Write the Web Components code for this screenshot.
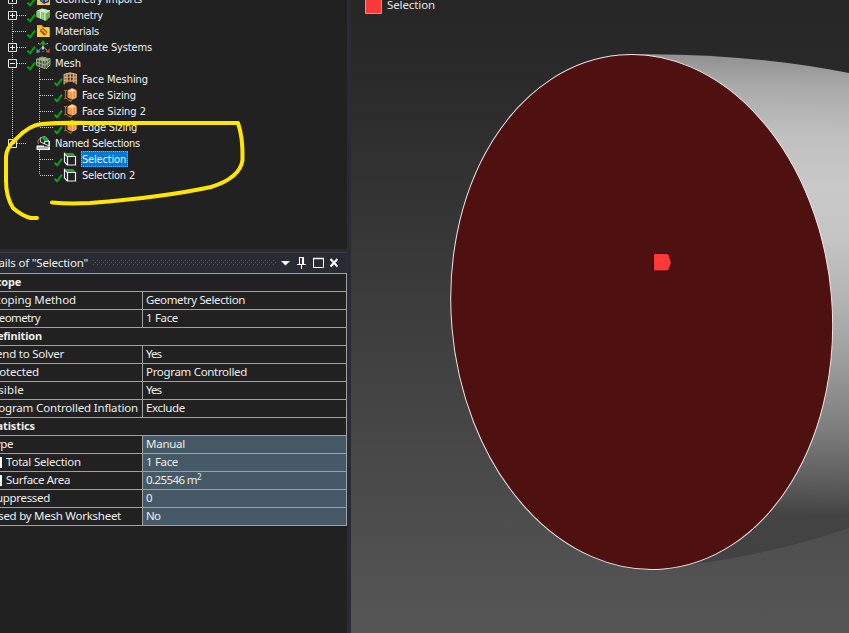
<!DOCTYPE html>
<html lang="en"><head><meta charset="utf-8"><title>Mechanical – Named Selections</title>
<style>body{margin:0;background:#212121;overflow:hidden}</style></head><body>
<mech-app></mech-app>
<script>
const define=(n,c)=>customElements.define(n,c);
class Base extends HTMLElement{
  connectedCallback(){ if(!this.shadowRoot){this.attachShadow({mode:'open'}).innerHTML=this.render();} }
}
/* Text run set to a given width through letter spacing. */
define('fit-text',class extends Base{
  render(){return `<style>:host{display:inline-block;white-space:pre;width:max-content;line-height:inherit}span{display:inline-block}</style><span>${this.getAttribute('text').replace('^2','<sup style="font-size:8px;line-height:0;vertical-align:4px">2</sup>')}</span>`}
  connectedCallback(){super.connectedCallback();const s=this.shadowRoot.querySelector('span'),w=+this.getAttribute('w');
    if(w){const n=s.textContent.length;s.style.letterSpacing=((w-s.getBoundingClientRect().width)/n)+'px'}}
});
const sizing=`<path d="M4.500 3.500L9 1l4.500 2v7.500L9 12.500 4.500 10.500z" fill="#f19a4b"/><path d="M5 4l4-2.300L13 3.300 9.500 5z" fill="#ffd6ad"/><path d="M5 4l4.500 1v7M13 4v6.500L9.500 12" stroke="#ffc38c" stroke-width=".8" fill="none"/><path d="M2.500 3.500v8M1 3.500h3M1 11.500h3M4 12.500l4 1.800M8 12.300v2.700" stroke="#a5642c" stroke-width="1.200" fill="none"/>`;
const select=`<path d="M4.500 5.500h8v8.500h-8z" fill="none" stroke="#eee" stroke-width="1.200"/><path d="M4.500 5.500l-3-3v8.500l3 3" fill="none" stroke="#eee" stroke-width="1.200"/><path d="M2 2h8l3 3.200H5z" fill="#18aa20"/><path d="M4.500 5.500H13" stroke="#eee"/>`;
const icons={
 imports:`<path d="M1 2h5l1 2h7v10H1z" fill="#ffc93c"/><path d="M4 5l5-2 4 3v5l-5 2-4-3z" fill="#183f7d"/><path d="M4 6l3 2v3l-3-2z" fill="#2e80d7"/><path d="M9 8l3-1v3l-3 1z" fill="#e88a2f"/>`,
 geometry:`<path d="M.5 4L6 1.500 14 3.500V10l-4 4L.5 10z" fill="#72a955"/><path d="M.5 4L6 1.500 14 3.500 9 6z" fill="#cfe8ba"/><path d="M.5 4L9 6v7.500L.5 10z" fill="#91c577"/><path d="M4.500 5v6.500M9 6v7.500M9 6L14 3.500M4.500 5l5-2.500" stroke="#e3f2d6" stroke-width="1" fill="none"/>`,
 materials:`<path d="M1 2h5l1 2h6.500v10H1z" fill="#f7b718"/><path d="M1 5h12.500v9H1z" fill="#ffcf3d"/><path d="M4.500 6l3-1 4 4-1.500 3-2 .5-4-4z" fill="#9b571a"/><path d="M5 7l2-1 4 4-1 1.500z" fill="#ee9a45"/>`,
 coords:`<path d="M7 8V3M7 8l5 4M7 8l-5 4M2 4l3 2M12 4l-3 2M7 9v4" stroke="#bbb" stroke-width="1" stroke-dasharray="2 1"/><path d="M7 1l3 4H4z" fill="#16a422"/><path d="M.5 14V9.500l4 3.500z" fill="#5897d5"/><path d="M13.500 14V9.500l-4 3.500z" fill="#e0452d"/><path d="M6 4h2v4H6z" fill="#16a422"/><circle cx="7" cy="8.700" r="1.300" fill="#ddd"/>`,
 mesh:`<path d="M.5 4L6 1.500 14 3.500V10l-4 4L.5 10.500z" fill="#47593e"/><path d="M.5 4L6 1.500 14 3.500 9 6z" fill="#7f956f"/><path d="M.5 4L9 6v7.500L.5 10.500zM3.300 5v6.500M6.300 5.500v7M.5 7.300L9 10l5-3.500M3.300 2.800l8.200 2.400M11.700 5v6.500M9 6l5-2.500V10l-4 4M5 5l5-2.500" stroke="#b3c3a5" stroke-width=".8" fill="none"/>`,
 facemesh:`<path d="M1 3q6-3 12.500 0v10.500l-3-2q-3.500-1.500-6.500 0l-3 2z" fill="#9d683b"/><path d="M1 3.500q6-3 12.500 0M1 6.500q6-2 12.500 0M1 9.500q6-2 12.500 0M1 3v10.500M4 2v9.500M7.200 1.500v9.500M10.400 2v9.500M13.400 3v10.500" stroke="#e3c39c" stroke-width=".8" fill="none"/><path d="M5 4h1.500v1.500H5zM8 4h1.500v1.500H8zM5 7h1.500v2H5zM8 7h1.500v2H8z" fill="#3a271a"/>`,
 sizing,select,
 named:`<path d="M4 3l5-1.500 4.500 5V11L9 9 4.500 7z" fill="#272727" stroke="#ddd"/><path d="M5 2.500l4-1 3.500 4-4 .5z" fill="#19aa29"/><path d="M8.500 6.500l4.500-.5v5M8.500 6.500V9" stroke="#fff" fill="none"/><path d="M3.500 4Q1 6 2.500 9" stroke="#a9642f" stroke-width="1.200" fill="none"/><path d="M.5 10.500h7l1 1h5.500v3.500H.5z" fill="#eee"/><path d="M2 13h10" stroke="#777"/>`
};
define('tree-row',class extends Base{
 render(){const a=k=>this.getAttribute(k),l=+a('level'),x=l?63:36,ex=a('expand');let g='';
  const line=(p)=>`<path d="${p}" stroke="#c9c9c9" stroke-width="1" stroke-dasharray="1 1" fill="none"/>`;
  if(a('trunk')!=='none')g+=line('M12.5 0V'+(a('trunk')==='end'?8:16));
  if(l){g+=line('M39.5 0V'+(a('last')!==null?8:16))+line('M40 8.500H54')}
  else g+=line('M13 8.500H27');
  if(a('open')!==null)g+=line('M39.500 13V16');
  if(ex)g+=`<path d="M8.500 4.500h8v8h-8z" fill="#212121" stroke="#e4e4e4"/><path d="M10 8.500h5${ex==='+'?'M12.500 6v5':''}" stroke="#eee"/>`;
  if(a('nocheck')===null)g+=`<path d="M${x-8.500} 11.600l2.500 2.700 5-6.600" stroke="#05a510" stroke-width="2" fill="none"/>`;
  return `<style>:host{display:flex;height:16px;font:11px/16px "DejaVu Sans Condensed","DejaVu Sans",sans-serif;font-stretch:condensed;color:#f1f1f1}svg{flex:none;overflow:visible}.l{padding:1px 2px 0 1px;height:16px;line-height:16px;box-sizing:border-box}.s{background:#0078d7;outline:1px dotted #f39a4d;outline-offset:-1px}</style>
  <svg width="${l?81:54}" height="16">${g}<g transform="translate(${x},0)">${icons[a('icon')]}</g></svg><div class="l ${a('selected')!==null?'s':''}"><fit-text text="${a('label')}" w="${a('w')}"></fit-text></div>`}
});
define('outline-tree',class extends Base{render(){
 const r=[['Geometry Imports','imports',87,'expand="+"'],['Geometry','geometry',48,'expand="+"'],['Materials','materials',44,''],['Coordinate Systems','coords',97,'expand="+"'],['Mesh','mesh',26,'expand="-" open'],['Face Meshing','facemesh',66,'level="1"'],['Face Sizing','sizing',54,'level="1"'],['Face Sizing 2','sizing',64,'level="1"'],['Edge Sizing','sizing',55,'level="1" last'],['Named Selections','named',85,'expand="-" open nocheck trunk="end"'],['Selection','select',44,'level="1" trunk="none" selected'],['Selection 2','select',53,'level="1" last trunk="none"']];
 return `<style>:host{display:block;height:249px;overflow:hidden;background:#212121}div{margin-top:-9px}</style><div>${r.map(i=>`<tree-row label="${i[0]}" icon="${i[1]}" w="${i[2]}" ${i[3]}></tree-row>`).join('')}</div>`}
});
define('detail-row',class extends Base{render(){const a=k=>this.getAttribute(k),h=a('head')!==null;
 return `<style>:host{display:grid;grid-template-columns:${h?'1fr':'142px 1fr'};height:18px;box-sizing:border-box;border-bottom:1px solid #a0a0a0;font:${h?'bold 11px':'11.5px'}/17px "Noto Sans",sans-serif;color:#ededed}.k{display:flex;justify-content:flex-start;overflow:hidden;position:relative}fit-text{margin-top:-1px}.k fit-text{margin-left:${a('x')}px}.v{display:flex;border-left:1px solid #a0a0a0;padding-left:3px;background:${a('ro')!==null?'#455a66':'#212121'}}i{width:2px;height:11px;margin:3px 0 0;background:#f5f5f5;position:absolute;left:0}</style>
 <div class="k">${a('check')!==null?'<i></i>':''}<fit-text text="${a('k')}" w="${a('kw')}"></fit-text></div>${h?'':`<div class="v"><fit-text text="${a('v')}" w="${a('vw')}"></fit-text></div>`}`}
});
define('details-title',class extends Base{render(){return `<style>:host{display:flex;align-items:center;height:21px;box-sizing:border-box;border-top:1px solid #3b3f45;background:#282b31;color:#eee;font:11.5px/20px "Noto Sans",sans-serif}fit-text{margin-left:-20px}.d{flex:1;height:5px;margin:0 3px 1px 5px}svg{display:block}</style><fit-text text='Details of &quot;Selection&quot;' w="108"></fit-text><svg class="d"><defs><pattern id="p" width="4" height="4" patternUnits="userSpaceOnUse"><path d="M0 0h1v1H0zM2 2h1v1H2z" fill="#50545a"/></pattern></defs><rect width="100%" height="5" fill="url(#p)"/></svg><svg width="67" height="20"><path d="M1 8h9L5.500 12.500z" fill="#fff"/><path d="M19.500 4.500h4v7h-4zM17 11.500h9M21.500 12v4M22.500 5v6" fill="none" stroke="#fff" stroke-width="1.100"/><path d="M33.500 5.500h10v9h-10z" fill="none" stroke="#fff"/><path d="M33 5.500h11" stroke="#fff" stroke-width="1.500"/><path d="M50.500 6l7 7.500M57.500 6L50.500 13.500" stroke="#fff" stroke-width="2"/></svg>`}});
define('details-panel',class extends Base{render(){
 const r=[['Scope',-10,31],['Scoping Method',-11,87,'Geometry Selection',99],['Geometry',-9,49,'1 Face',32],['Definition',-11,53],['Send to Solver',-10,74,'Yes',15],['Protected',-12,51,'Program Controlled',101],['Visible',-12,36,'Yes',15],['Program Controlled Inflation',-13,151,'Exclude',39],['Statistics',-14,49],['Type',-11,24,'Manual',39,'ro'],['Total Selection',6,75,'1 Face',32,'ro check'],['Surface Area',6,64,'0.25546 m^2',55,'ro check'],['Suppressed',-10,60,'0',6,'ro'],['Used by Mesh Worksheet',-10,131,'No',14,'ro']];
 return `<style>:host{display:flex;flex-direction:column;background:#212121}.t{border-top:1px solid #a0a0a0;border-right:1px solid #a0a0a0}</style><details-title></details-title><div class="t">${r.map(i=>`<detail-row k="${i[0]}" x="${i[1]}" kw="${i[2]}" ${i[3]?`v="${i[3]}" vw="${i[4]}" ${i[5]||''}`:'head'}></detail-row>`).join('')}</div>`}
});
define('geometry-view',class extends Base{render(){return `<style>:host{display:block;background:#282828;overflow:hidden}svg{display:block}</style>
<svg width="498" height="633" viewBox="351 0 498 633"><defs><linearGradient id="b" x2="0" y2="1"><stop stop-color="#262626"/><stop offset=".1" stop-color="#292929"/><stop offset="1" stop-color="#565656"/></linearGradient>
<linearGradient id="c" gradientUnits="userSpaceOnUse" x1="800" y1="58" x2="790" y2="548"><stop stop-color="#929292"/><stop offset=".06" stop-color="#aaa"/><stop offset=".16" stop-color="#c0c0c0"/><stop offset=".26" stop-color="#c9c9c9"/><stop offset=".36" stop-color="#c5c5c5"/><stop offset=".48" stop-color="#b5b5b5"/><stop offset=".6" stop-color="#a0a0a0"/><stop offset=".76" stop-color="#7c7c7c"/><stop offset=".86" stop-color="#5e5e5e"/><stop offset=".93" stop-color="#444"/><stop offset="1" stop-color="#424242"/></linearGradient></defs>
<rect x="351" width="498" height="633" fill="url(#b)"/><path d="M625 54.500Q740 52 849 73V528Q780 552 690 565L641 500z" fill="url(#c)"/>
<ellipse cx="641.700" cy="312" rx="190.400" ry="257.900" transform="rotate(-4.9 641.700 312)" fill="#4f1010" stroke="#ece5e5" stroke-width="1"/>
<path d="M653.500 253.500h15l3 9-3 8.500h-15z" fill="#ff3838" stroke="#1b0505"/><path d="M365.500-5h16v18.500h-16z" fill="#ff3838" stroke="#aaa"/></svg>`}});
define('view-legend',class extends Base{render(){return `<style>:host{display:block;font:11.5px/16px "Noto Sans",sans-serif;color:#e4e4e4}</style><fit-text text="Selection" w="48"></fit-text>`}});
define('yellow-mark',class extends Base{render(){return `<style>:host{display:block;pointer-events:none}svg{display:block}</style><svg width="260" height="235" fill="none" stroke="#ffe600" stroke-width="4" stroke-linecap="round" stroke-linejoin="round"><path d="M37 218H31Q22 216 13 208Q6 197 6 181V157Q6 148 16 139Q29 125 42 124Q58 122.500 90 123H238Q243 137 242.500 160Q240 178 211 187Q165 197 90 203Q68 204 52 202.500"/></svg>`}});
define('mech-app',class extends Base{render(){return `<style>:host{display:grid;grid-template-columns:347px 4px 498px;height:633px;position:relative;overflow:hidden}.left{display:flex;flex-direction:column}.g{height:3px;background:#292c32}.bar{background:#292c33}details-panel{flex:1}yellow-mark{position:absolute;left:0;top:0}view-legend{position:absolute;left:387px;top:-3px}</style><div class="left"><outline-tree></outline-tree><div class="g"></div><details-panel></details-panel></div><div class="bar"></div><geometry-view></geometry-view><view-legend></view-legend><yellow-mark></yellow-mark>`}});
</script></body></html>
